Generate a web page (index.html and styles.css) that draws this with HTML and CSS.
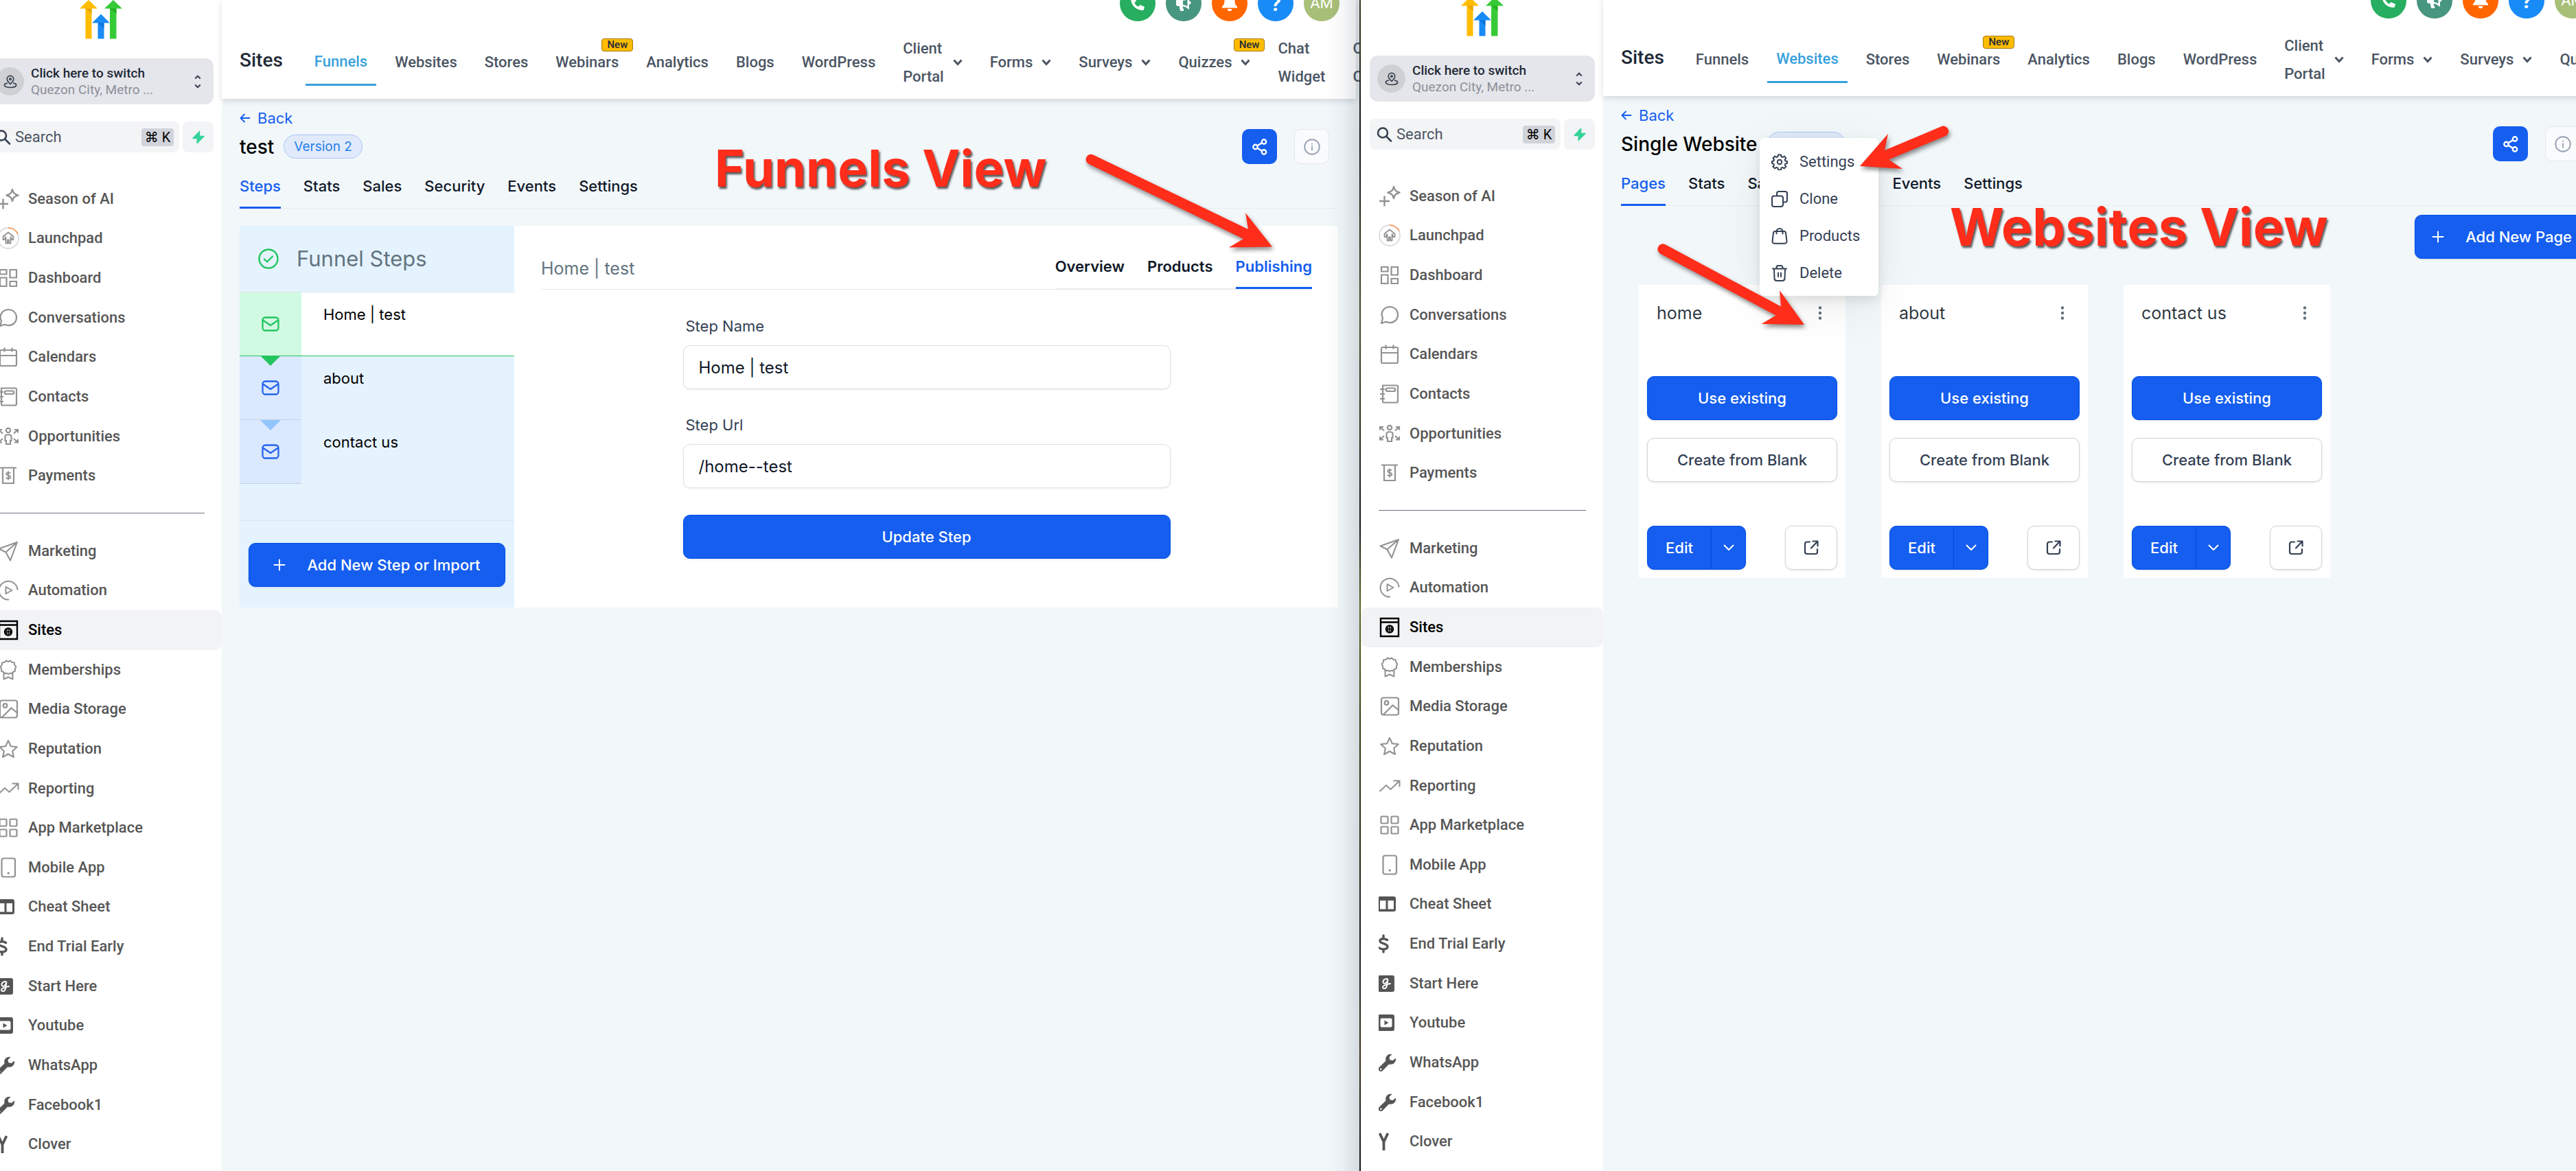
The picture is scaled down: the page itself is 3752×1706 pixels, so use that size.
FILE: index.html
```html
<!DOCTYPE html>
<html lang="en">
<head>
  <meta charset="UTF-8">
  <meta name="viewport" content="width=device-width, initial-scale=1.0">
  <title>Sites - Funnels and Websites</title>
  <link rel="stylesheet" href="styles.css">
</head>
<body>
  <!-- Icon sprite -->
  <svg class="sprite" xmlns="http://www.w3.org/2000/svg">
    <symbol id="logo" viewBox="0 0 62 57">
      <path fill="#ffbc00" d="M13 0L26 12.500H17.500V56.500H8.500V12.500H0z"/>
      <path fill="#e8a200" d="M8.500 12.500H17.500V20z"/>
      <path fill="#37ca37" d="M49 0L62 12.500H53.500V56.500H44V12.500H36z"/>
      <path fill="#22b222" d="M44 12.500H53.500V20z"/>
      <path fill="#188bf6" d="M31 20.500L44 33.500H35.500V56.500H26.500V33.500H18z"/>
      <path fill="#0c74dc" d="M26.500 33.500H35.500V41z"/>
    </symbol>
    <symbol id="pin" viewBox="0 0 20 20"><g fill="none" stroke="currentColor" stroke-width="1.700"><path d="M10 13.500C7 10.500 5.200 8.700 5.200 6.200a4.800 4.800 0 0 1 9.600 0c0 2.500-1.800 4.300-4.800 7.300z"/><circle cx="10" cy="6.200" r="1.200"/><path d="M6 12.200c-3 .3-4.700 1.500-4.700 2.900C1.300 17 5 18.500 10 18.500s8.700-1.500 8.700-3.400c0-1.400-1.700-2.600-4.700-2.900"/></g></symbol>
    <symbol id="updown" viewBox="0 0 12 24"><path fill="none" stroke="currentColor" stroke-width="2.500" d="M1.500 6.500L6 2l4.500 4.500M1.500 17.500L6 22l4.500-4.500"/></symbol>
    <symbol id="search" viewBox="0 0 24 24"><g fill="none" stroke="currentColor" stroke-width="2.600" stroke-linecap="round"><circle cx="10" cy="9.500" r="7"/><path d="M15.500 15L22 21.500"/></g></symbol>
    <symbol id="bolt" viewBox="0 0 20 20"><path fill="#34d399" stroke="#34d399" stroke-width="1.500" stroke-linejoin="round" d="M11.500 1.500L2 11.500h6.500l-.5 7L18 8.500h-6.500z"/></symbol>
    <symbol id="ai" viewBox="0 0 32 32"><g fill="none" stroke="currentColor" stroke-width="2.400"><path d="M8.500 15.500v15M1 23h15"/><path stroke-linejoin="round" d="M22 2c1.200 5 3 7 8.500 8.500C25 12 23.200 14 22 19c-1.200-5-3-7-8.500-8.500C19 9 20.800 7 22 2z"/></g></symbol>
    <symbol id="launch" viewBox="0 0 32 32"><g fill="none" stroke="currentColor" stroke-width="1.800"><circle cx="16" cy="16" r="15" stroke="#dcdcde"/><path stroke="#f6a06a" d="M16 1a15 15 0 0 1 14 9"/><path stroke-linejoin="round" d="M16 7.500l7.500 6v4.500h-3v-3.500h-1v9h-2.500v-5h-2v5h-2.500v-9h-1v3.500h-3v-4.500z"/></g></symbol>
    <symbol id="dash" viewBox="0 0 32 32"><path fill="none" stroke="currentColor" stroke-width="2.200" d="M4 4h9.500v6.500H4zM18.500 4H28v11.500h-9.500zM4 15.500h9.500V28H4zM18.500 21H28v7h-9.500z"/></symbol>
    <symbol id="chat" viewBox="0 0 32 32"><path fill="none" stroke="currentColor" stroke-width="2.200" stroke-linejoin="round" d="M4 28l2-7.500C2 13 7 4.500 16 4c7 0 12 5 12 11.500S23 27.500 16 27c-2.500 0-4-.5-5.500-1.200z"/></symbol>
    <symbol id="cal" viewBox="0 0 32 32"><path fill="none" stroke="currentColor" stroke-width="2.200" d="M6 6h20a2 2 0 0 1 2 2v19a2 2 0 0 1-2 2H6a2 2 0 0 1-2-2V8a2 2 0 0 1 2-2zM4 14h24M10.500 2.500v6M21.500 2.500v6"/></symbol>
    <symbol id="book" viewBox="0 0 32 32"><path fill="none" stroke="currentColor" stroke-width="2.200" d="M6 3.500h20a2 2 0 0 1 2 2v21a2 2 0 0 1-2 2H8a2 2 0 0 1-2-2zM2 9h7M2 16h7M2 23h7M13 7.500h9a2 2 0 0 1 0 4.500h-9a2 2 0 0 1 0-4.500z"/></symbol>
    <symbol id="opp" viewBox="0 0 32 32"><g fill="none" stroke="currentColor" stroke-width="2.200"><circle cx="16" cy="7" r="3.200"/><path d="M13 27v-5h-1.500v-6.500c0-3 9-3 9 0V22H19v5z"/><path d="M2 10.500V6h5M2.500 6.500L8 11.500M30 10.500V6h-5M29.500 6.500L24 11.500M2 20v4.500h5M2.500 24L8 19M30 20v4.500h-5M29.500 24L24 19"/></g></symbol>
    <symbol id="pay" viewBox="0 0 32 32"><g fill="none" stroke="currentColor" stroke-width="2.200"><path d="M4 4.500h24M8 4.500V27h16V4.500"/><path stroke-width="1.900" d="M19.200 12.500c-1-1.500-6-1.700-6 1s6 1.700 6 4.500-5 2.500-6.400.8M16 9.500v13"/></g></symbol>
    <symbol id="send" viewBox="0 0 32 32"><path fill="none" stroke="currentColor" stroke-width="2.100" stroke-linejoin="round" d="M29 3L2.500 12.500l10 5L19 29.500zM12.500 17.500L29 3"/></symbol>
    <symbol id="auto" viewBox="0 0 32 32"><g fill="none" stroke="currentColor" stroke-width="2"><path d="M12.500 29.200A13.500 13.500 0 1 1 29.500 15.500M12 29c2 .6 4 .6 5 .5"/><path stroke-linejoin="round" d="M12.500 11l9 5-9 5z"/></g></symbol>
    <symbol id="sites" viewBox="0 0 32 32"><g fill="none" stroke="currentColor" stroke-width="2.400"><path d="M3 3h26v26H3zM3 8.500h26"/><circle cx="16" cy="18.500" r="5.200" stroke-width="2"/><path stroke-width="1.600" d="M11 18.500h10M16 13.500v10M13.800 14c-1 3-1 6 0 9M18.200 14c1 3 1 6 0 9"/></g></symbol>
    <symbol id="medal" viewBox="0 0 32 32"><path fill="none" stroke="currentColor" stroke-width="2" stroke-linejoin="round" d="M16 4l3-1.500 2.500 2.500 3.300.3.300 3.300 2.400 2.700-1.600 2.900.2 3.300-3 1.500-2.300 2.300-2.800-.5-2 1.500-2-1.500-2.800.5L8.900 19l-3-1.500.2-3.300-1.600-2.900L6.900 8.600l.3-3.300 3.300-.3L13 2.500zM9.500 20v9.500l6.500-3 6.500 3V20"/></symbol>
    <symbol id="image" viewBox="0 0 32 32"><g fill="none" stroke="currentColor" stroke-width="2.200"><rect x="4" y="3.500" width="25" height="25" rx="3"/><circle cx="11.500" cy="11" r="2.800"/><path d="M7 28l13.500-13.500 8.500 7"/></g></symbol>
    <symbol id="star" viewBox="0 0 32 32"><path fill="none" stroke="currentColor" stroke-width="2.100" stroke-linejoin="round" d="M16 4l3.800 8.200 9 1-6.700 6 1.900 8.800-8-4.500L8 28l1.900-8.800-6.700-6 9-1z"/></symbol>
    <symbol id="trend" viewBox="0 0 32 32"><path fill="none" stroke="currentColor" stroke-width="2" d="M1.500 24l9.500-9 6.500 6L30.500 8.500M21.500 8.500h9v9"/></symbol>
    <symbol id="apps" viewBox="0 0 32 32"><g fill="none" stroke="currentColor" stroke-width="2.200"><rect x="3.500" y="3.500" width="10" height="10" rx="1"/><rect x="18.500" y="3.500" width="10" height="10" rx="1"/><rect x="3.500" y="18.500" width="10" height="10" rx="1"/><rect x="18.500" y="18.500" width="10" height="10" rx="1"/></g></symbol>
    <symbol id="mobile" viewBox="0 0 32 32"><rect x="6.500" y="2.500" width="19.500" height="27" rx="3" fill="none" stroke="currentColor" stroke-width="2.200"/><circle cx="16.200" cy="24" r="1.700" fill="currentColor"/></symbol>
    <symbol id="columns" viewBox="0 0 32 32"><path fill="currentColor" fill-rule="evenodd" d="M2 5h20a3 3 0 0 1 3 3v16a3 3 0 0 1-3 3H2a3 3 0 0 1-3-3V8a3 3 0 0 1 3-3zM2 11v12.500h8.500V11zM13.500 11v12.500H22V11z"/></symbol>
    <symbol id="dollar" viewBox="0 0 32 32"><path fill="none" stroke="currentColor" stroke-width="3.400" stroke-linecap="round" d="M12.500 10.500C9 8 2 8 2 12s11 3.500 11 8-8 5-12 2M7 4v4M7 24.500v3.500"/></symbol>
    <symbol id="gsq" viewBox="0 0 32 32"><rect x="-1" y="4" width="24" height="24" rx="3" fill="currentColor"/><path fill="none" stroke="#fff" stroke-width="1.900" stroke-linecap="round" d="M13.500 10c-2-2.500-7.500 0-7 4 .5 3.500 5.500 2 7-4l-1.500 9c-.8 5-5.500 5-6 2.500s6-4.500 11-5.500"/></symbol>
    <symbol id="yt" viewBox="0 0 32 32"><path fill="currentColor" fill-rule="evenodd" d="M2 4h18a3 3 0 0 1 3 3v18a3 3 0 0 1-3 3H2a3 3 0 0 1-3-3V7a3 3 0 0 1 3-3zM4.500 9.500a2 2 0 0 0-2 2v9a2 2 0 0 0 2 2h13a2 2 0 0 0 2-2v-9a2 2 0 0 0-2-2zM8.500 12.500L14.500 16l-6 3.500z"/></symbol>
    <symbol id="wrench" viewBox="0 0 32 32"><path fill="currentColor" fill-rule="evenodd" d="M25 9.500c1 6-4 10.500-10 9L5.500 28.300c-3 2-7.500-1.300-5-5L10.500 13.500c-1.500-6 3-11 9-9.500l-4 4 .8 4 4.200 1zM3.300 24.300a1.300 1.300 0 1 0 .1 0z"/></symbol>
    <symbol id="ylet" viewBox="0 0 32 32"><path fill="none" stroke="currentColor" stroke-width="3.800" d="M1.500 4l6 12.500L13.500 4M7.500 16v13"/></symbol>
    <symbol id="phone" viewBox="0 0 24 24"><path fill="#fff" d="M2 3.500L7 2l3 6.500-2.800 2.400c1.400 2.600 3.200 4.500 5.900 5.900l2.400-2.800 6.500 3-1.500 5C9.500 22.500 1.500 14 2 3.500z"/></symbol>
    <symbol id="horn" viewBox="0 0 24 24"><path fill="#fff" fill-rule="evenodd" d="M20 1v7.500a2.500 2.500 0 0 1 0 5V21c-3-2.800-6-4.300-9.500-4.800.3 2 .8 3.600 2 5l-.8 1.800H7.500c-1.200-2-1.700-4.500-1.500-7H4a3 3 0 0 1-3-3V9a3 3 0 0 1 3-3h5.500C13.500 5.500 17 4 20 1zM17.500 5.800c-2 1.200-4 2-6.500 2.300v5.800c2.500.3 4.500 1.100 6.500 2.300z"/></symbol>
    <symbol id="bell" viewBox="0 0 24 24"><path fill="#fff" d="M12 0c5 0 7.500 3.500 7.500 8 0 4.500 1 6.500 3.500 8.500v2H1v-2C3.500 14.500 4.500 12.500 4.500 8 4.500 3.500 7 0 12 0zM8.800 20h6.400a3.200 3.200 0 0 1-6.400 0z"/></symbol>
    <symbol id="chev" viewBox="0 0 14 10"><path fill="none" stroke="currentColor" stroke-width="3" d="M1.500 1.500L7 7.500l5.500-6"/></symbol>
    <symbol id="arrow-left" viewBox="0 0 16 16"><path fill="none" stroke="currentColor" stroke-width="1.800" stroke-linecap="round" stroke-linejoin="round" d="M14.500 8h-13M7 2.500L1.500 8 7 13.500"/></symbol>
    <symbol id="share" viewBox="0 0 24 24"><g fill="none" stroke="currentColor" stroke-width="2.400"><circle cx="5.500" cy="12" r="3.200"/><circle cx="18" cy="4.500" r="3.200"/><circle cx="18" cy="19.500" r="3.200"/><path d="M8.200 10.300l7-4.200M8.200 13.700l7 4.200"/></g></symbol>
    <symbol id="info" viewBox="0 0 24 24"><g fill="none" stroke="currentColor" stroke-width="1.900" stroke-linecap="round"><circle cx="12" cy="12" r="10.800"/><path d="M12 11.500v5M12 7.500v.2"/></g></symbol>
    <symbol id="check" viewBox="0 0 30 30"><g fill="none" stroke="currentColor" stroke-width="2.400" stroke-linecap="round" stroke-linejoin="round"><circle cx="15" cy="15" r="13.500"/><path d="M9 15.500l4 4 8-8"/></g></symbol>
    <symbol id="mail" viewBox="0 0 26 22"><g fill="none" stroke="currentColor" stroke-width="2.300" stroke-linejoin="round"><rect x="1.500" y="1.500" width="23" height="19" rx="4"/><path d="M2 5.500l11 7.500 11-7.500"/></g></symbol>
    <symbol id="plus" viewBox="0 0 18 18"><path fill="none" stroke="currentColor" stroke-width="2" stroke-linecap="round" d="M9 1.500v15M1.500 9h15"/></symbol>
    <symbol id="gear" viewBox="0 0 24 24"><g fill="none" stroke="currentColor" stroke-width="2" stroke-linejoin="round"><circle cx="12" cy="12" r="3.200"/><path d="M10 1.500h4l.6 2.700 2 .8 2.400-1.500 2.300 3-1.600 2.100.7 1.900 2.600.5v3l-2.600.6-.7 1.900 1.600 2.200-2.600 2.700-2.300-1.500-1.900.8-.5 2.800h-4l-.6-2.800-1.900-.8L5 21.400l-2.600-2.700L4 16.500l-.7-1.900L1 14v-3l2.400-.5L4 8.600 2.500 6.500l2.500-3L7.400 5l2-.8z"/></g></symbol>
    <symbol id="clone" viewBox="0 0 24 24"><g fill="none" stroke="currentColor" stroke-width="2"><rect x="1" y="7.500" width="16" height="15.500" rx="3"/><path d="M8 7.500V4a3 3 0 0 1 3-3h9a3 3 0 0 1 3 3v9.500a3 3 0 0 1-3 3h-3"/></g></symbol>
    <symbol id="bag" viewBox="0 0 24 24"><g fill="none" stroke="currentColor" stroke-width="2" stroke-linecap="round"><path d="M5.500 5h13a2.500 2.500 0 0 1 2.500 2.200l1.500 12a3 3 0 0 1-3 3.600h-15a3 3 0 0 1-3-3.600l1.500-12A2.500 2.500 0 0 1 5.500 5z"/><path d="M7.500 8.500V5.500a4.500 4.500 0 0 1 9 0v3"/></g></symbol>
    <symbol id="trash" viewBox="0 0 24 24"><g fill="none" stroke="currentColor" stroke-width="2" stroke-linecap="round"><path d="M2 5.500h20M4 5.500l.5 14.500a3.500 3.500 0 0 0 3.500 3h8a3.500 3.500 0 0 0 3.500-3L20 5.500M7.500 5V3.500A2.500 2.500 0 0 1 10 1h4a2.500 2.500 0 0 1 2.500 2.500V5M10 11.500v5.500M14 11.500v5.500"/></g></symbol>
    <symbol id="dots" viewBox="0 0 6 20"><g fill="currentColor"><circle cx="3" cy="2.500" r="2.200"/><circle cx="3" cy="10" r="2.200"/><circle cx="3" cy="17.500" r="2.200"/></g></symbol>
    <symbol id="chev-thin" viewBox="0 0 16 10"><path fill="none" stroke="currentColor" stroke-width="2" stroke-linecap="round" stroke-linejoin="round" d="M1.500 1.500L8 8l6.500-6.500"/></symbol>
    <symbol id="external" viewBox="0 0 22 22"><path fill="none" stroke="currentColor" stroke-width="2.200" stroke-linecap="round" stroke-linejoin="round" d="M9 2.500H5a3 3 0 0 0-3 3V17a3 3 0 0 0 3 3h12a3 3 0 0 0 3-3v-4M13.500 1.500h7v7M20 2l-9 9.500"/></symbol>
  </svg>

  <div class="desktop">

    <!-- Funnels window -->
    <div class="window window-left">
      <div class="app">
        <aside class="sidebar">
          <svg class="logo"><use href="#logo"/></svg>
          <button class="switcher">
            <span class="avatar"><svg class="i20"><use href="#pin"/></svg></span>
            <span class="switcher-text"><b>Click here to switch</b><span>Quezon City, Metro ...</span></span>
            <svg class="updown"><use href="#updown"/></svg>
          </button>
          <div class="search-row">
            <label class="search-box"><svg class="i24"><use href="#search"/></svg><input type="text" placeholder="Search" aria-label="Search"><kbd>⌘ K</kbd></label>
            <button class="bolt-btn" aria-label="Quick actions"><svg class="i20"><use href="#bolt"/></svg></button>
          </div>
          <nav class="side-nav side-nav-top">
            <a href="#"><svg class="i32"><use href="#ai"/></svg>Season of AI</a>
            <a href="#"><svg class="i32"><use href="#launch"/></svg>Launchpad</a>
            <a href="#"><svg class="i32"><use href="#dash"/></svg>Dashboard</a>
            <a href="#"><svg class="i32"><use href="#chat"/></svg>Conversations</a>
            <a href="#"><svg class="i32"><use href="#cal"/></svg>Calendars</a>
            <a href="#"><svg class="i32"><use href="#book"/></svg>Contacts</a>
            <a href="#"><svg class="i32"><use href="#opp"/></svg>Opportunities</a>
            <a href="#"><svg class="i32"><use href="#pay"/></svg>Payments</a>
          </nav>
          <hr>
          <nav class="side-nav side-nav-bottom">
            <a href="#"><svg class="i32"><use href="#send"/></svg>Marketing</a>
            <a href="#"><svg class="i32"><use href="#auto"/></svg>Automation</a>
            <a href="#" class="current"><svg class="i32"><use href="#sites"/></svg>Sites</a>
            <a href="#"><svg class="i32"><use href="#medal"/></svg>Memberships</a>
            <a href="#"><svg class="i32"><use href="#image"/></svg>Media Storage</a>
            <a href="#"><svg class="i32"><use href="#star"/></svg>Reputation</a>
            <a href="#"><svg class="i32"><use href="#trend"/></svg>Reporting</a>
            <a href="#"><svg class="i32"><use href="#apps"/></svg>App Marketplace</a>
            <a href="#"><svg class="i32"><use href="#mobile"/></svg>Mobile App</a>
            <a href="#"><svg class="i32 solid"><use href="#columns"/></svg>Cheat Sheet</a>
            <a href="#"><svg class="i32 solid"><use href="#dollar"/></svg>End Trial Early</a>
            <a href="#"><svg class="i32 solid"><use href="#gsq"/></svg>Start Here</a>
            <a href="#"><svg class="i32 solid"><use href="#yt"/></svg>Youtube</a>
            <a href="#"><svg class="i32 solid"><use href="#wrench"/></svg>WhatsApp</a>
            <a href="#"><svg class="i32 solid"><use href="#wrench"/></svg>Facebook1</a>
            <a href="#"><svg class="i32 solid"><use href="#ylet"/></svg>Clover</a>
          </nav>
        </aside>

        <main class="main">
          <header class="topbar">
            <div class="actions">
              <button class="round phone" aria-label="Call"><svg class="i24"><use href="#phone"/></svg></button>
              <button class="round horn" aria-label="Announcements"><svg class="i24"><use href="#horn"/></svg></button>
              <button class="round bell" aria-label="Notifications"><svg class="i24"><use href="#bell"/></svg></button>
              <button class="round help">?</button>
              <button class="round user">AM</button>
            </div>
            <nav class="topnav">
              <h2>Sites</h2>
              <a href="#" class="active">Funnels</a>
              <a href="#">Websites</a>
              <a href="#">Stores</a>
              <a href="#">Webinars<span class="new">New</span></a>
              <a href="#">Analytics</a>
              <a href="#">Blogs</a>
              <a href="#">WordPress</a>
              <a href="#"><span class="two">Client Portal</span><svg class="chev"><use href="#chev"/></svg></a>
              <a href="#">Forms<svg class="chev"><use href="#chev"/></svg></a>
              <a href="#">Surveys<svg class="chev"><use href="#chev"/></svg></a>
              <a href="#">Quizzes<svg class="chev"><use href="#chev"/></svg><span class="new">New</span></a>
              <a href="#"><span class="two">Chat Widget</span></a>
              <a href="#"><span class="two">QR Codes</span></a>
            </nav>
          </header>

          <div class="page">
            <a href="#" class="back"><svg class="i16"><use href="#arrow-left"/></svg>Back</a>
            <div class="title-row">
              <h1>test</h1>
              <span class="pill">Version 2</span>
              <div class="title-actions">
                <button class="icon-btn primary" aria-label="Share"><svg class="i24"><use href="#share"/></svg></button>
                <button class="icon-btn ghost" aria-label="Info"><svg class="i24"><use href="#info"/></svg></button>
              </div>
            </div>
            <div class="tabs">
              <a href="#" class="active">Steps</a>
              <a href="#">Stats</a>
              <a href="#">Sales</a>
              <a href="#">Security</a>
              <a href="#">Events</a>
              <a href="#">Settings</a>
            </div>

            <div class="funnel">
              <section class="steps">
                <div class="steps-head"><svg class="i30"><use href="#check"/></svg>Funnel Steps</div>
                <ul>
                  <li class="selected"><span class="step-icon"><svg class="mail"><use href="#mail"/></svg></span>Home | test</li>
                  <li><span class="step-icon"><svg class="mail"><use href="#mail"/></svg></span>about</li>
                  <li><span class="step-icon"><svg class="mail"><use href="#mail"/></svg></span>contact us</li>
                </ul>
                <div class="steps-foot">
                  <button class="btn primary add-step"><svg class="i18"><use href="#plus"/></svg>Add New Step or Import</button>
                </div>
              </section>
              <section class="detail">
                <div class="detail-head">
                  <h3>Home | test</h3>
                  <div class="tabs">
                    <a href="#">Overview</a>
                    <a href="#">Products</a>
                    <a href="#" class="active">Publishing</a>
                  </div>
                </div>
                <form class="step-form">
                  <label for="stepName">Step Name</label>
                  <input type="text" id="stepName" value="Home | test">
                  <label for="stepUrl">Step Url</label>
                  <input type="text" id="stepUrl" value="/home--test">
                  <button type="button" class="btn primary">Update Step</button>
                </form>
              </section>
            </div>
          </div>
        </main>
      </div>
    </div>

    <!-- Websites window -->
    <div class="window window-right">
      <div class="app">
        <aside class="sidebar">
          <svg class="logo"><use href="#logo"/></svg>
          <button class="switcher">
            <span class="avatar"><svg class="i20"><use href="#pin"/></svg></span>
            <span class="switcher-text"><b>Click here to switch</b><span>Quezon City, Metro ...</span></span>
            <svg class="updown"><use href="#updown"/></svg>
          </button>
          <div class="search-row">
            <label class="search-box"><svg class="i24"><use href="#search"/></svg><input type="text" placeholder="Search" aria-label="Search"><kbd>⌘ K</kbd></label>
            <button class="bolt-btn" aria-label="Quick actions"><svg class="i20"><use href="#bolt"/></svg></button>
          </div>
          <nav class="side-nav side-nav-top">
            <a href="#"><svg class="i32"><use href="#ai"/></svg>Season of AI</a>
            <a href="#"><svg class="i32"><use href="#launch"/></svg>Launchpad</a>
            <a href="#"><svg class="i32"><use href="#dash"/></svg>Dashboard</a>
            <a href="#"><svg class="i32"><use href="#chat"/></svg>Conversations</a>
            <a href="#"><svg class="i32"><use href="#cal"/></svg>Calendars</a>
            <a href="#"><svg class="i32"><use href="#book"/></svg>Contacts</a>
            <a href="#"><svg class="i32"><use href="#opp"/></svg>Opportunities</a>
            <a href="#"><svg class="i32"><use href="#pay"/></svg>Payments</a>
          </nav>
          <hr>
          <nav class="side-nav side-nav-bottom">
            <a href="#"><svg class="i32"><use href="#send"/></svg>Marketing</a>
            <a href="#"><svg class="i32"><use href="#auto"/></svg>Automation</a>
            <a href="#" class="current"><svg class="i32"><use href="#sites"/></svg>Sites</a>
            <a href="#"><svg class="i32"><use href="#medal"/></svg>Memberships</a>
            <a href="#"><svg class="i32"><use href="#image"/></svg>Media Storage</a>
            <a href="#"><svg class="i32"><use href="#star"/></svg>Reputation</a>
            <a href="#"><svg class="i32"><use href="#trend"/></svg>Reporting</a>
            <a href="#"><svg class="i32"><use href="#apps"/></svg>App Marketplace</a>
            <a href="#"><svg class="i32"><use href="#mobile"/></svg>Mobile App</a>
            <a href="#"><svg class="i32 solid"><use href="#columns"/></svg>Cheat Sheet</a>
            <a href="#"><svg class="i32 solid"><use href="#dollar"/></svg>End Trial Early</a>
            <a href="#"><svg class="i32 solid"><use href="#gsq"/></svg>Start Here</a>
            <a href="#"><svg class="i32 solid"><use href="#yt"/></svg>Youtube</a>
            <a href="#"><svg class="i32 solid"><use href="#wrench"/></svg>WhatsApp</a>
            <a href="#"><svg class="i32 solid"><use href="#wrench"/></svg>Facebook1</a>
            <a href="#"><svg class="i32 solid"><use href="#ylet"/></svg>Clover</a>
          </nav>
        </aside>

        <main class="main">
          <header class="topbar">
            <div class="actions">
              <button class="round phone" aria-label="Call"><svg class="i24"><use href="#phone"/></svg></button>
              <button class="round horn" aria-label="Announcements"><svg class="i24"><use href="#horn"/></svg></button>
              <button class="round bell" aria-label="Notifications"><svg class="i24"><use href="#bell"/></svg></button>
              <button class="round help">?</button>
              <button class="round user">AM</button>
            </div>
            <nav class="topnav">
              <h2>Sites</h2>
              <a href="#">Funnels</a>
              <a href="#" class="active">Websites</a>
              <a href="#">Stores</a>
              <a href="#">Webinars<span class="new">New</span></a>
              <a href="#">Analytics</a>
              <a href="#">Blogs</a>
              <a href="#">WordPress</a>
              <a href="#"><span class="two">Client Portal</span><svg class="chev"><use href="#chev"/></svg></a>
              <a href="#">Forms<svg class="chev"><use href="#chev"/></svg></a>
              <a href="#">Surveys<svg class="chev"><use href="#chev"/></svg></a>
              <a href="#">Quizzes</a>
            </nav>
          </header>

          <div class="page">
            <a href="#" class="back"><svg class="i16"><use href="#arrow-left"/></svg>Back</a>
            <div class="title-row">
              <h1>Single Website</h1>
              <span class="pill">Version 2</span>
              <div class="title-actions">
                <button class="icon-btn primary" aria-label="Share"><svg class="i24"><use href="#share"/></svg></button>
                <button class="icon-btn ghost" aria-label="Info"><svg class="i24"><use href="#info"/></svg></button>
              </div>
            </div>
            <div class="tabs">
              <a href="#" class="active">Pages</a>
              <a href="#">Stats</a>
              <a href="#">Sales</a>
              <a href="#">Security</a>
              <a href="#">Events</a>
              <a href="#">Settings</a>
            </div>

            <div class="pages-bar">
              <button class="btn primary add-page"><svg class="i18"><use href="#plus"/></svg>Add New Page</button>
            </div>
            <div class="cards">
              <article class="card">
                <div class="card-head"><h3>home</h3><button class="more" aria-label="More"><svg class="dots"><use href="#dots"/></svg></button></div>
                <div class="card-body">
                  <button class="btn primary">Use existing</button>
                  <button class="btn outline">Create from Blank</button>
                </div>
                <div class="card-foot">
                  <div class="split"><button class="btn primary">Edit</button><button class="btn primary" aria-label="More edit options"><svg class="chev-thin"><use href="#chev-thin"/></svg></button></div>
                  <button class="btn outline open" aria-label="Open"><svg class="i22"><use href="#external"/></svg></button>
                </div>
                <div class="menu">
                  <button><svg class="i24"><use href="#gear"/></svg>Settings</button>
                  <button><svg class="i24"><use href="#clone"/></svg>Clone</button>
                  <button><svg class="i24"><use href="#bag"/></svg>Products</button>
                  <button><svg class="i24"><use href="#trash"/></svg>Delete</button>
                </div>
              </article>
              <article class="card">
                <div class="card-head"><h3>about</h3><button class="more" aria-label="More"><svg class="dots"><use href="#dots"/></svg></button></div>
                <div class="card-body">
                  <button class="btn primary">Use existing</button>
                  <button class="btn outline">Create from Blank</button>
                </div>
                <div class="card-foot">
                  <div class="split"><button class="btn primary">Edit</button><button class="btn primary" aria-label="More edit options"><svg class="chev-thin"><use href="#chev-thin"/></svg></button></div>
                  <button class="btn outline open" aria-label="Open"><svg class="i22"><use href="#external"/></svg></button>
                </div>
              </article>
              <article class="card">
                <div class="card-head"><h3>contact us</h3><button class="more" aria-label="More"><svg class="dots"><use href="#dots"/></svg></button></div>
                <div class="card-body">
                  <button class="btn primary">Use existing</button>
                  <button class="btn outline">Create from Blank</button>
                </div>
                <div class="card-foot">
                  <div class="split"><button class="btn primary">Edit</button><button class="btn primary" aria-label="More edit options"><svg class="chev-thin"><use href="#chev-thin"/></svg></button></div>
                  <button class="btn outline open" aria-label="Open"><svg class="i22"><use href="#external"/></svg></button>
                </div>
              </article>
            </div>
          </div>
        </main>
      </div>
    </div>

    <!-- Red callouts -->
    <svg class="arrows">
      <path d="M1592 225.500L1818 334 1814 310 1853 359.500 1790 360.500 1811 348 1586 239A7 7 0 0 1 1592 225.500z"/>
      <path d="M2827 184.500L2745 219 2750 195 2709 242 2771 246 2751 232.500 2834 198A7 7 0 0 0 2827 184.500z"/>
      <path d="M2426 356.500L2594 446.500 2592 423 2628 473 2565.500 472 2586.500 459.500 2418 369.500A7 7 0 0 1 2426 356.500z"/>
    </svg>
    <div class="callout callout-funnels">Funnels View</div>
    <div class="callout callout-websites">Websites View</div>
  </div>
</body>
</html>
```

FILE: styles.css
```css
* {
  box-sizing: border-box;
}
body {
  margin: 0;
  font-family: Inter, "Liberation Sans", sans-serif;
  font-size: 22px;
  line-height: 26px;
  color: #101828;
  background: #f2f7fa;
}
h1, h2, h3, ul {
  margin: 0;
  padding: 0;
}
h1, h2, h3 {
  font-weight: 500;
}
a {
  color: inherit;
  text-decoration: none;
}
button, input {
  font: inherit;
  color: inherit;
  border: none;
  background: none;
  margin: 0;
  padding: 0;
}
button {
  cursor: pointer;
}
svg {
  display: block;
  flex: none;
  overflow: visible;
}
.sprite {
  position: absolute;
  width: 0;
  height: 0;
}

/* icon sizes */
.i16 { width: 16px; height: 16px; }
.i18 { width: 18px; height: 18px; }
.i20 { width: 20px; height: 20px; }
.i22 { width: 22px; height: 22px; }
.i24 { width: 24px; height: 24px; }
.i30 { width: 30px; height: 30px; }
.i32 { width: 32px; height: 32px; }

/* windows */
.desktop {
  position: relative;
  display: grid;
  grid-template-columns: minmax(0, 1980fr) minmax(0, 1772fr);
  height: 100vh;
  overflow: hidden;
}
.window {
  position: relative;
  overflow: hidden;
  background: #f2f7fa;
}
.app {
  display: flex;
  min-height: 100%;
}
.window-left .app {
  margin-left: -30px;
}
.window-left::after {
  content: "";
  position: absolute;
  top: 0;
  right: 0;
  bottom: 0;
  width: 48px;
  background: linear-gradient(to right, rgba(30, 45, 60, 0), rgba(30, 45, 60, 0.04) 50%, rgba(30, 45, 60, 0.14));
}
.window-right {
  padding-left: 2px;
  background: linear-gradient(#3d3a22, #0d1412 12%, #4a4526 27%, #101614 45%, #5f6420 52%, #33380f 62%, #17201a 80%, #3b2d20 90%, #101513);
}
.window-right .app {
  width: calc(100% + 45px);
  height: calc(100% + 4px);
  margin-top: -4px;
}

/* sidebar */
.sidebar {
  flex: none;
  width: 353px;
  background: #fff;
  font-family: Roboto, sans-serif;
}
.logo {
  width: 62px;
  height: 57px;
  margin-left: 146px;
}
.switcher {
  display: flex;
  align-items: center;
  width: 328px;
  height: 67px;
  margin: 28px 0 0 13px;
  padding: 0 18px 0 11px;
  border-radius: 12px;
  background: #e5e6eb;
  text-align: left;
  color: #374151;
}
.avatar {
  display: grid;
  place-items: center;
  width: 41px;
  height: 41px;
  margin-right: 10px;
  border-radius: 50%;
  background: #cfd0d3;
}
.switcher-text {
  flex: 1;
  font-size: 19px;
  line-height: 24px;
  color: #8b8f98;
}
.switcher-text b {
  display: block;
  font-weight: 500;
  color: #1f2937;
}
.updown {
  width: 10px;
  height: 22px;
}
.search-row {
  display: flex;
  gap: 5px;
  width: 328px;
  margin: 25px 0 39px 13px;
}
.search-box {
  display: flex;
  flex: 1;
  align-items: center;
  gap: 6px;
  min-width: 0;
  height: 45px;
  padding: 0 8px 0 9px;
  border-radius: 8px;
  background: #f3f4f6;
  color: #374151;
}
.search-box input {
  flex: 1;
  width: 100%;
  min-width: 0;
}
.search-box input::placeholder {
  color: #4b5563;
}
.search-box kbd {
  flex: none;
  width: 47px;
  border-radius: 4px;
  background: #d1d3da;
  font: 20px/26px Roboto, "DejaVu Sans", sans-serif;
  text-align: center;
  white-space: nowrap;
  color: #000;
}
.bolt-btn {
  display: grid;
  flex: none;
  place-items: center;
  width: 45px;
  border-radius: 8px;
  background: #f3f4f6;
}
.side-nav {
  display: grid;
  grid-auto-rows: 1fr;
}
.side-nav-top {
  height: 461px;
}
.side-nav-bottom {
  height: 922px;
}
.sidebar hr {
  height: 1px;
  margin: 25px 25px 26px 26px;
  border: none;
  background: #6b7280;
}
.side-nav a {
  display: flex;
  align-items: center;
  gap: 13px;
  padding-left: 26px;
  border-radius: 10px;
  font-weight: 500;
  color: #565656;
}
.side-nav svg {
  color: #929292;
}
.side-nav .solid {
  color: #555;
}
.side-nav .current {
  background: #f2f3f5;
}
.side-nav .current,
.side-nav .current svg {
  color: #000;
}

/* top bar */
.main {
  flex: 1;
  min-width: 0;
}
.window-left .main {
  padding-right: 5px;
}
.window-right .main {
  background: #f2f7fa;
}
.topbar {
  height: 144px;
  background: #fff;
  box-shadow: 0 3px 8px rgba(16, 24, 40, 0.14);
  font-family: Roboto, sans-serif;
}
.actions {
  display: flex;
  justify-content: flex-end;
  gap: 15px;
  height: 37px;
  padding-right: 24px;
}
.round {
  display: grid;
  place-items: center;
  width: 52px;
  height: 52px;
  margin-top: -21px;
  border-radius: 50%;
  color: #fff;
}
.phone { background: #27ae60; }
.horn { background: #47967f; }
.bell { background: #ff6600; }
.help { background: #188bf6; font-size: 32px; font-weight: 700; }
.user { background: #a8bf78; }
.topnav {
  display: flex;
  align-items: center;
  gap: 14px;
  height: 107px;
  padding-left: 26px;
  line-height: 41px;
  font-weight: 500;
  white-space: nowrap;
  color: #4b5563;
}
.topnav h2 {
  margin-right: 19px;
  padding-bottom: 6px;
  font-size: 28px;
  color: #1f2937;
}
.topnav a {
  position: relative;
  display: flex;
  align-items: center;
  gap: 13px;
  padding: 0 13px;
}
.topnav .active {
  height: 69px;
  border-bottom: 3px solid #37a0dc;
  color: #37a0dc;
}
.two {
  width: min-content;
  white-space: normal;
}
.chev {
  width: 14px;
  height: 10px;
}
.new {
  position: absolute;
  top: -14px;
  right: -8px;
  padding: 0 7px;
  border: 1px solid #a37a12;
  border-radius: 4px;
  background: #ffbc00;
  font-size: 15px;
  line-height: 17px;
  color: #1f2937;
}

/* page head */
.page {
  padding: 15px 26px 0;
}
.back {
  display: flex;
  align-items: center;
  gap: 10px;
  color: #155eef;
}
.title-row {
  display: flex;
  align-items: center;
  gap: 14px;
  height: 51px;
  margin-top: 3px;
}
.title-row h1 {
  font-size: 28px;
  color: #000;
}
.pill {
  padding: 0 14px;
  border: 1px solid #a9c8f8;
  border-radius: 18px;
  background: #e0eafa;
  font-size: 19px;
  line-height: 33px;
  color: #2680eb;
}
.title-actions {
  display: flex;
  gap: 25px;
  margin: 0 13px 0 auto;
}
.icon-btn {
  display: grid;
  place-items: center;
  width: 51px;
  height: 51px;
  border-radius: 10px;
}
.primary {
  background: #155eef;
  color: #fff;
}
.ghost {
  border: 1px solid #e4e7ec;
  background: #fafbfd;
  color: #98a2b3;
}
.tabs {
  display: flex;
  gap: 33px;
  font-weight: 500;
  box-shadow: inset 0 -1px #e9edf0;
}
.tabs a {
  padding: 19px 0 17px;
  border-bottom: 3px solid transparent;
}
.tabs .active {
  border-color: #155eef;
  color: #155eef;
}

/* buttons */
.btn {
  display: flex;
  align-items: center;
  justify-content: center;
  height: 64px;
  border: 1px solid #004eeb;
  border-radius: 10px;
  font-weight: 500;
  box-shadow: 0 1px 3px rgba(16, 24, 40, 0.12);
}
.outline {
  border-color: #d0d5dd;
  background: #fff;
  color: #344054;
}

/* funnel steps */
.funnel {
  display: flex;
  margin-top: 25px;
  background: #fff;
}
.steps {
  flex: none;
  width: 400px;
  background: #e5f3ff;
}
.steps-head {
  display: flex;
  align-items: center;
  gap: 26px;
  height: 97px;
  padding-left: 27px;
  border-bottom: 1px solid #dbe6ef;
  font-size: 31px;
  color: #63747f;
}
.steps-head svg {
  color: #22c55e;
}
.steps ul {
  list-style: none;
  margin-bottom: 53px;
}
.steps li {
  position: relative;
  display: flex;
  height: 93px;
  padding-top: 19px;
  color: #000;
}
.step-icon {
  display: grid;
  place-items: center;
  width: 90px;
  height: 93px;
  margin: -19px 32px 0 0;
  border-bottom: 1px solid #c5d0e2;
  background: #dbe9fe;
  color: #2563eb;
}
.mail {
  width: 26px;
  height: 22px;
}
.steps .selected {
  background: #fff;
  border-bottom: 1px solid #22c55e;
}
.selected .step-icon {
  height: 92px;
  border: none;
  background: #d1fae3;
  color: #22c55e;
}
.steps li:not(:last-child)::after {
  content: "";
  position: absolute;
  top: 100%;
  left: 30px;
  z-index: 1;
  border: 15px solid transparent;
  border-top-color: #93c5fd;
  border-bottom: none;
}
.steps li.selected:not(:last-child)::after {
  border-top-color: #22c55e;
}
.steps-foot {
  padding: 32px 13px 30px;
  border-top: 1px solid #dbe6ef;
}
.add-step {
  width: 100%;
  gap: 31px;
}

/* step detail */
.detail {
  flex: 1;
  padding: 0 38px 0 39px;
}
.detail-head {
  display: flex;
  align-items: flex-end;
  justify-content: space-between;
  height: 93px;
  border-bottom: 1px solid #e4e7ec;
}
.detail-head h3 {
  padding-bottom: 17px;
  font-size: 25px;
  font-weight: 400;
  color: #63747f;
}
.detail-head .tabs {
  font-weight: 600;
}
.step-form {
  display: flex;
  flex-direction: column;
  max-width: 710px;
  margin: 0 auto;
  padding-top: 40px;
}
.step-form label {
  padding-left: 4px;
  color: #344054;
}
.step-form input {
  height: 64px;
  margin: 15px 0 39px;
  padding: 0 22px;
  border: 1px solid #dfe2e8;
  border-radius: 10px;
  background: #fff;
  font-size: 24px;
  box-shadow: 0 1px 3px rgba(16, 24, 40, 0.08);
}

/* website pages */
.pages-bar {
  display: flex;
  justify-content: flex-end;
  margin: 13px 0 38px;
}
.add-page {
  gap: 31px;
  padding: 0 24px;
}
.cards {
  display: flex;
  gap: 52px;
  padding-left: 26px;
}
.card {
  position: relative;
  flex: none;
  width: 301px;
  padding: 26px 12px 12px;
  background: #fff;
}
.card-head {
  display: flex;
  justify-content: space-between;
  margin-bottom: 77px;
  padding: 0 22px 0 14px;
}
.card-head h3 {
  font-size: 25px;
  font-weight: 400;
  line-height: 30px;
  color: #303a42;
}
.more {
  color: #607179;
}
.dots {
  width: 6px;
  height: 20px;
}
.card-body {
  display: grid;
  gap: 26px;
  margin-bottom: 64px;
}
.card-foot {
  display: flex;
  justify-content: space-between;
}
.split {
  display: flex;
}
.split .btn:first-child {
  width: 94px;
  border-radius: 10px 0 0 10px;
}
.split .btn:last-child {
  width: 50px;
  border-left: none;
  border-radius: 0 10px 10px 0;
}
.chev-thin {
  width: 16px;
  height: 10px;
}
.open {
  width: 76px;
}
.menu {
  position: absolute;
  top: -214px;
  left: 176px;
  z-index: 2;
  width: 173px;
  padding: 8px 0 6px;
  border-radius: 6px;
  background: #fff;
  box-shadow: 0 6px 16px rgba(0, 0, 0, 0.1), 0 16px 70px rgba(0, 0, 0, 0.07);
  font-family: Roboto, sans-serif;
}
.menu button {
  display: flex;
  align-items: center;
  gap: 17px;
  width: 100%;
  height: 54px;
  padding-left: 17px;
  color: #344054;
}

/* callouts */
.arrows {
  position: absolute;
  top: 0;
  left: 0;
  z-index: 3;
  width: 100%;
  height: 100%;
  fill: #ff2d1a;
  pointer-events: none;
  filter: drop-shadow(2px 4px 3px rgba(0, 0, 0, 0.45));
}
.callout {
  position: absolute;
  z-index: 3;
  font-weight: 700;
  line-height: 80px;
  white-space: nowrap;
  color: #ff2d1a;
  text-shadow: 2px 3px 3px rgba(0, 0, 0, 0.65);
}
.callout-funnels {
  top: 205px;
  left: 1041px;
  font-size: 74px;
}
.callout-websites {
  top: 290px;
  left: 2840px;
  font-size: 76px;
}
```
